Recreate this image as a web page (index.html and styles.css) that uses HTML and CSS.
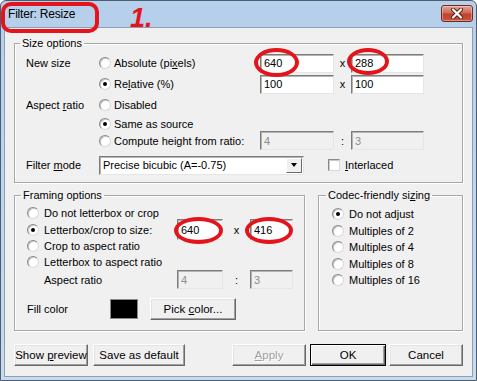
FILE: index.html
```html
<!DOCTYPE html>
<html lang="en">
<head>
  <meta charset="UTF-8">
  <title>Filter: Resize</title>
  <link rel="stylesheet" href="styles.css">
</head>
<body>
  <div class="window">
    <div class="titlebar">
      <span class="title">Filter: Resize</span>
      <span class="note">1.</span>
      <button class="close">
        <svg width="14" height="11" viewBox="0 0 14 11">
          <path d="M3 1.5 L11 9.5 M11 1.5 L3 9.5" stroke="#5b1d14" stroke-width="4" stroke-linecap="round"/>
          <path d="M3 1.5 L11 9.5 M11 1.5 L3 9.5" stroke="#fff" stroke-width="2.2" stroke-linecap="round"/>
        </svg>
      </button>
    </div>

    <div class="client">
      <!-- size options -->
      <fieldset class="group">
        <legend>Size options</legend>
        <div class="size-grid">
          <span>New size</span>
          <label class="opt"><span class="radio"></span><span>Absolute (pi<u>x</u>els)</span></label>
          <span class="field ring ring-a"><input type="text" value="640"></span>
          <span class="sep">x</span>
          <span class="field ring ring-b"><input type="text" value="288"></span>

          <span></span>
          <label class="opt"><span class="radio on"></span><span>Re<u>l</u>ative (%)</span></label>
          <span class="field"><input type="text" value="100"></span>
          <span class="sep">x</span>
          <span class="field"><input type="text" value="100"></span>

          <span>Aspect <u>r</u>atio</span>
          <label class="opt wide"><span class="radio"></span><span>Disabled</span></label>

          <span></span>
          <label class="opt wide"><span class="radio on"></span><span>Same as source</span></label>

          <span></span>
          <label class="opt"><span class="radio"></span><span>Compute height from ratio:</span></label>
          <span class="field"><input type="text" value="4" disabled></span>
          <span class="sep">:</span>
          <span class="field"><input type="text" value="3" disabled></span>

          <span>Filter <u>m</u>ode</span>
          <div class="filter-row">
            <div class="select">
              <span class="select-text">Precise bicubic (A=-0.75)</span>
              <span class="drop"><span class="tri"></span></span>
            </div>
            <label class="check-opt"><span class="check"></span><span><u>I</u>nterlaced</span></label>
          </div>
        </div>
      </fieldset>

      <div class="lower">
        <!-- framing -->
        <fieldset class="group framing">
          <legend>Framing options</legend>
          <div class="frame-grid">
            <label class="opt full"><span class="radio"></span><span>Do not letterbox or crop</span></label>

            <label class="opt"><span class="radio on"></span><span>Letterbox/crop to size:</span></label>
            <span class="field tall ring ring-c"><input type="text" value="640"></span>
            <span class="sep">x</span>
            <span class="field tall ring ring-d"><input type="text" value="416"></span>

            <label class="opt full"><span class="radio"></span><span>Crop to aspect ratio</span></label>

            <label class="opt full"><span class="radio"></span><span>Letterbox to aspect ratio</span></label>

            <span class="sub">Aspect ratio</span>
            <span class="field"><input type="text" value="4" disabled></span>
            <span class="sep">:</span>
            <span class="field"><input type="text" value="3" disabled></span>

            <div class="fill-row">
              <span class="fill-label">Fill color</span>
              <span class="swatch"></span>
              <button class="btn pick">Pick <u>c</u>olor...</button>
            </div>
          </div>
        </fieldset>

        <!-- codec -->
        <fieldset class="group codec">
          <legend>Codec-friendly si<u>z</u>ing</legend>
          <div class="codec-list">
            <label class="opt"><span class="radio on"></span><span>Do not adjust</span></label>
            <label class="opt"><span class="radio"></span><span>Multiples of 2</span></label>
            <label class="opt"><span class="radio"></span><span>Multiples of 4</span></label>
            <label class="opt"><span class="radio"></span><span>Multiples of 8</span></label>
            <label class="opt"><span class="radio"></span><span>Multiples of 16</span></label>
          </div>
        </fieldset>
      </div>

      <div class="buttons">
        <button class="btn">Show <u>p</u>review</button>
        <button class="btn save">Save as default</button>
        <button class="btn apply" disabled><u>A</u>pply</button>
        <button class="btn default">OK</button>
        <button class="btn">Cancel</button>
      </div>
    </div>
  </div>
</body>
</html>
```

FILE: styles.css
```css
body {
  margin: 0;
  font-family: "Liberation Sans", Arial, sans-serif;
  font-size: 11px;
  color: #000;
  background: #fff;
}

.window {
  width: 477px;
  height: 381px;
  box-sizing: border-box;
  border: 1px solid #4d5d70;
  border-radius: 6px 6px 0 0;
  background: linear-gradient(#b6cfea, #c8dbef);
  padding: 0 3px 3px;
  display: flex;
  flex-direction: column;
}

.titlebar {
  height: 26px;
  flex: none;
  display: flex;
  align-items: flex-start;
  position: relative;
}

.title {
  position: relative;
  margin: 6px 0 0 4px;
  font-size: 12px;
  line-height: 15px;
  letter-spacing: -0.2px;
}

/* red annotation box round the title */
.title::after {
  content: "";
  position: absolute;
  left: -7px;
  top: -5px;
  width: 98px;
  height: 31px;
  box-sizing: border-box;
  border: 4px solid #e3141c;
  border-radius: 10px;
  z-index: 2;
}

.note {
  position: absolute;
  left: 126px;
  top: 4px;
  font-size: 27px;
  line-height: 27px;
  font-weight: bold;
  font-style: italic;
  color: #e3141c;
  z-index: 2;
}

.close {
  margin: 4px 0 0 auto;
  width: 32px;
  height: 17px;
  padding: 0;
  border: 1px solid #6e2a22;
  border-radius: 3px;
  background: linear-gradient(#e3a496, #d06a58 45%, #c0412c 55%, #c8563e);
  box-shadow: inset 0 0 0 1px rgba(255, 255, 255, 0.35);
  display: flex;
  align-items: center;
  justify-content: center;
}

.client {
  flex: 1;
  background: #f0f0f0;
  border: 1px solid #8ba0b8;
  padding: 9px 9px 0;
  display: flex;
  flex-direction: column;
}

.group {
  margin: 0;
  min-width: 0;
  border: 1px solid #a7a7a7;
  box-shadow: inset 1px 1px 0 #fff, 1px 1px 0 #fff;
  padding: 3px 11px 1px;
}

.group legend {
  padding: 0 2px;
  margin-left: -6px;
  line-height: 13px;
}

/* size options */
.size-grid {
  display: grid;
  grid-template-columns: 73px 161px 74px 17px 73px;
  grid-template-rows: 20px 22px 20px 17px 17px 32px;
  align-items: center;
  white-space: nowrap;
}

.size-grid .wide {
  grid-column: 2 / 6;
}

.filter-row {
  grid-column: 2 / 6;
  display: flex;
  align-items: center;
}

.opt {
  display: flex;
  align-items: center;
  gap: 3px;
  white-space: nowrap;
}

.radio {
  width: 12px;
  height: 12px;
  box-sizing: border-box;
  border-radius: 50%;
  border: 1px solid;
  border-color: #8a8a8a #d8d8d8 #d8d8d8 #8a8a8a;
  background: #fff;
  box-shadow: inset 1px 1px 0 #c8c8c8;
  position: relative;
  flex: none;
}

.radio.on::after {
  content: "";
  position: absolute;
  left: 3px;
  top: 3px;
  width: 4px;
  height: 4px;
  border-radius: 50%;
  background: #000;
}

.sep {
  text-align: center;
}

.field {
  display: block;
  position: relative;
}

.field input {
  display: block;
  width: 100%;
  height: 19px;
  box-sizing: border-box;
  margin: 0;
  padding: 0 3px;
  font: inherit;
  color: #000;
  background: #fff;
  border: 1px solid;
  border-color: #7c7c7c #e6e6e6 #e6e6e6 #7c7c7c;
  box-shadow: inset 1px 1px 0 #b4b4b4;
  outline: none;
}

.field input:disabled {
  background: #f0f0f0;
  color: #8d8d8d;
}

.field.tall input {
  height: 21px;
}

/* red annotation ellipses */
.ring::after {
  content: "";
  position: absolute;
  box-sizing: border-box;
  border: 4px solid #e3141c;
  border-radius: 50%;
  z-index: 2;
}

.ring-a::after { left: -6px; top: -6px; width: 45px; height: 29px; }
.ring-b::after { left: -4px; top: -6px; width: 42px; height: 27px; }
.ring-c::after { left: -3px; top: -2px; width: 49px; height: 27px; }
.ring-d::after { left: -5px; top: -2px; width: 48px; height: 27px; }

.select {
  width: 205px;
  height: 19px;
  box-sizing: border-box;
  border: 1px solid;
  border-color: #7c7c7c #e6e6e6 #e6e6e6 #7c7c7c;
  box-shadow: inset 1px 1px 0 #b4b4b4;
  background: #fff;
  display: flex;
  align-items: center;
}

.select-text {
  flex: 1;
  padding-left: 3px;
}

.drop {
  width: 16px;
  height: 15px;
  margin-right: 1px;
  box-sizing: border-box;
  background: #f0f0f0;
  border: 1px solid;
  border-color: #fff #6a6a6a #6a6a6a #fff;
  display: flex;
  align-items: center;
  justify-content: center;
}

.tri {
  width: 0;
  height: 0;
  border-left: 3.5px solid transparent;
  border-right: 3.5px solid transparent;
  border-top: 4px solid #000;
}

.check-opt {
  display: flex;
  align-items: center;
  gap: 5px;
  margin-left: 24px;
}

.check {
  width: 12px;
  height: 12px;
  box-sizing: border-box;
  border: 1px solid;
  border-color: #8a8a8a #d8d8d8 #d8d8d8 #8a8a8a;
  box-shadow: inset 1px 1px 0 #c8c8c8;
  background: #fff;
}

/* lower groups */
.lower {
  display: flex;
  gap: 13px;
  margin-top: 6px;
}

.framing {
  width: 291px;
  box-sizing: border-box;
  padding: 3px 12px 1px;
}

.frame-grid {
  display: grid;
  grid-template-columns: 17px 133px 46px 27px 43px;
  grid-template-rows: 16px 17px 16px 16px 19px 40px;
  align-items: center;
}

.frame-grid .opt {
  grid-column: 1 / 3;
  gap: 5px;
}

.frame-grid .opt.full {
  grid-column: 1 / 6;
}

.sub {
  grid-column: 2;
}

.fill-row {
  grid-column: 1 / 6;
  display: flex;
  align-items: center;
}

.fill-label {
  width: 83px;
}

.swatch {
  width: 28px;
  height: 20px;
  box-sizing: border-box;
  background: #000;
  border: 1px solid #8a8a8a;
}

.codec {
  flex: 1;
  padding: 4px 12px 1px 13px;
}

.codec-list .opt {
  height: 16.5px;
  gap: 5px;
}

/* buttons */
.btn {
  height: 22px;
  box-sizing: border-box;
  margin: 0;
  padding: 0;
  font: inherit;
  font-size: 11.5px;
  white-space: nowrap;
  color: #000;
  background: #f0f0f0;
  border: 1px solid;
  border-color: #fff #696969 #696969 #fff;
  box-shadow: inset -1px -1px 0 #a0a0a0, inset 1px 1px 0 #e3e3e3;
}

.pick {
  width: 86px;
  margin-left: 12px;
}

.buttons {
  display: flex;
  gap: 5px;
  margin-top: 13px;
}

.buttons .btn {
  width: 74px;
}

.buttons .save {
  width: 92px;
}

.buttons .apply {
  margin-left: auto;
  color: #a0a0a0;
  text-shadow: 1px 1px 0 #fff;
}

.buttons .default {
  width: 76px;
  margin-left: -1px;
  border: 1px solid #000;
  box-shadow: inset 1px 1px 0 #fff, inset -1px -1px 0 #696969, inset -2px -2px 0 #a0a0a0;
}

.buttons .btn + .default + .btn {
  margin-left: -2px;
}
```
